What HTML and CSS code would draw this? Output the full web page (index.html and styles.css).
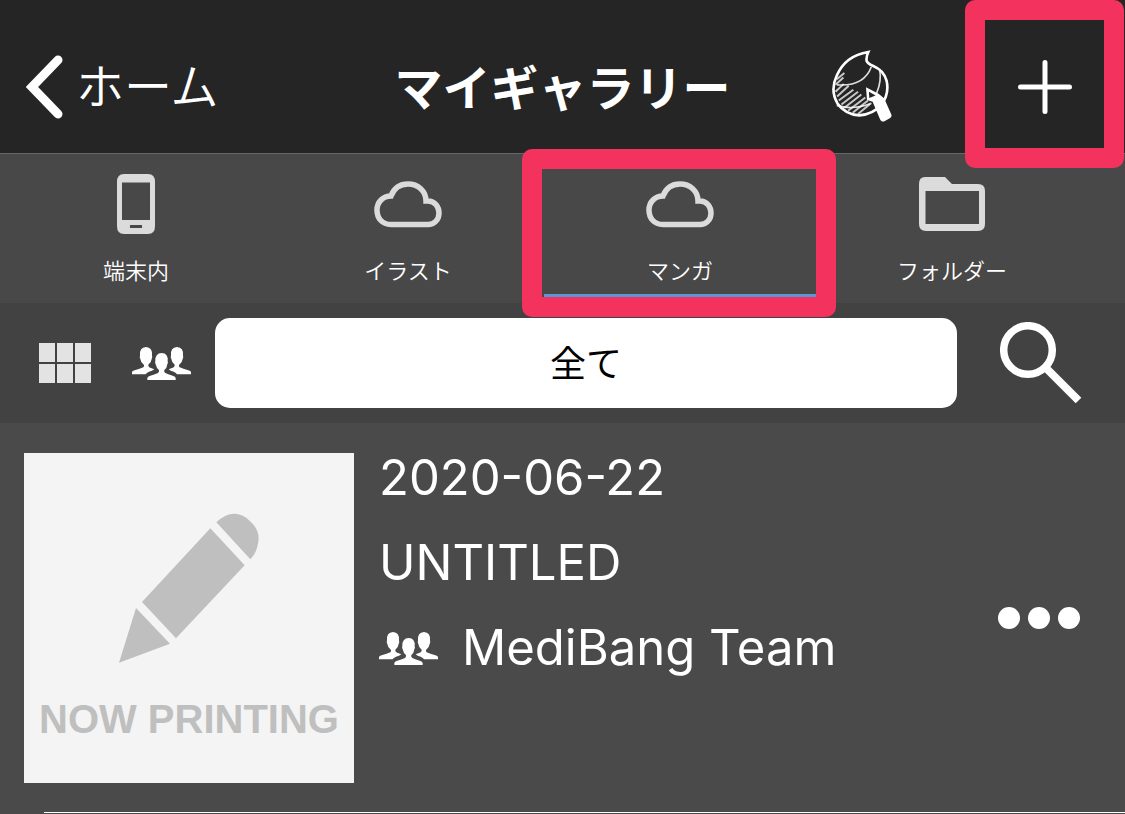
FILE: index.html
```html
<!DOCTYPE html>
<html lang="ja">
<head>
<meta charset="utf-8">
<meta name="viewport" content="width=device-width, initial-scale=1">
<title>マイギャラリー</title>
<link rel="stylesheet" href="styles.css">
</head>
<body>
<svg class="defs" aria-hidden="true">
  <symbol id="team" viewBox="0 0 177 99">
    <path d="M0 82V76Q0 72 8 70Q24 65 34 61Q37 58 36 54Q26 47 25 36Q22 31 24 25Q22 1 42 0Q62 1 60 25Q62 31 59 36Q58 46 49 53Q48 60 57 63L67 67Q61 72 51 74Q43 77 41 82Z"/>
    <path d="M177 82V76Q177 72 169 70Q153 65 143 61Q140 58 141 54Q151 47 152 36Q155 31 153 25Q155 1 135 0Q115 1 117 25Q115 31 118 36Q119 46 128 53Q129 60 120 63L110 67Q115 72 125 74Q133 77 135 82Z"/>
    <path d="M46 99V93Q46 88 55 86Q71 81 78 78Q82 75 81 69Q73 63 71 52Q68 47 70 42Q69 19 89 18Q109 19 107 42Q109 47 106 52Q105 63 97 69Q95 75 100 78Q107 81 122 86Q131 88 131 93V99Z"/>
  </symbol>
  <symbol id="cloud" viewBox="0 0 68 47">
    <path d="M17 15C20 7 26 3 34 3C44 3 52 10 52 20H54C61 20 65 26 65 32C65 39 60 43.500 54 43.500H17C8 43.500 3 37 3 29C3 21 9 15 17 15Z" fill="none" stroke="currentColor" stroke-width="5.500"/>
  </symbol>
</svg>

<header class="app-bar">
  <a class="back" href="#">
    <svg class="back-icon" viewBox="0 0 38 64" aria-hidden="true"><path d="M32 5L6 32L32 59" fill="none" stroke="currentColor" stroke-width="9" stroke-linecap="round" stroke-linejoin="miter"/></svg>
    ホーム
  </a>
  <h1 class="title">マイギャラリー</h1>
  <div class="actions">
    <button class="logo" type="button" aria-label="MediBang">
      <svg class="logo-icon" viewBox="66 58 180 220" aria-hidden="true" fill="none" stroke="currentColor">
        <g stroke-width="6" opacity=".75">
          <path d="M80 146L103 127M76 163L100 141M76 184L101 160M81 198L116 166M86 210L130 178M94 222L144 184M103 232L154 192M114 241L166 201M128 247L174 210M144 251L184 218"/>
        </g>
        <path d="M81 163Q161 169 184 109M209 115Q216 151 200 188M80 225Q127 240 180 220" stroke-width="5" opacity=".85"/>
        <path d="M175 64Q168 79 170 91Q173 99 190 106Q221 119 230 150Q239 189 215 222Q190 252 148 255Q105 252 82 219Q59 180 80 135Q106 75 175 64Z" stroke-width="8"/>
        <path d="M168 170L171 209L188 214L211 268Q216 277 225 272L241 263Q248 257 243 249L223 204L206 190Z" fill="currentColor" stroke="none"/>
        <path d="M177 184L178 203L197 195Z" fill="#252525" stroke="none"/>
      </svg>
    </button>
    <button class="add" type="button" aria-label="新規作成">
      <svg class="add-icon" viewBox="0 0 54 54" aria-hidden="true"><path d="M27 2.500V51.500M2.500 27H51.500" stroke="currentColor" stroke-width="5" stroke-linecap="round"/></svg>
    </button>
  </div>
</header>

<nav class="tabs">
  <a class="tab" href="#">
    <span class="tab-icon"><svg width="38" height="60" viewBox="0 0 38 60" aria-hidden="true"><path fill="currentColor" fill-rule="evenodd" d="M7 0H31Q38 0 38 8V52Q38 60 31 60H7Q0 60 0 52V8Q0 0 7 0ZM5 8.500V46H33V8.500ZM13 51V54H25V51Z"/></svg></span>
    端末内
  </a>
  <a class="tab" href="#">
    <span class="tab-icon"><svg width="68" height="47" aria-hidden="true"><use href="#cloud"/></svg></span>
    イラスト
  </a>
  <a class="tab tab-active" href="#" aria-current="page">
    <span class="tab-icon"><svg width="68" height="47" aria-hidden="true"><use href="#cloud"/></svg></span>
    マンガ
  </a>
  <a class="tab" href="#">
    <span class="tab-icon"><svg width="66" height="54" viewBox="0 0 66 54" aria-hidden="true"><path fill="currentColor" fill-rule="evenodd" d="M6 0H26L33 7H59Q66 7 66 14V47Q66 54 59 54H7Q0 54 0 47V7Q0 0 6 0ZM6.500 14V47H60V14Z"/></svg></span>
    フォルダー
  </a>
</nav>

<div class="filters">
  <button class="tool" type="button" aria-label="グリッド表示">
    <svg width="52" height="40" viewBox="0 0 52 40" aria-hidden="true"><path fill="#e3e3e3" d="M0 0H16V19H0ZM18 0H34V19H18ZM36 0H52V19H36ZM0 21H16V40H0ZM18 21H34V40H18ZM36 21H52V40H36Z"/></svg>
  </button>
  <button class="tool" type="button" aria-label="チーム">
    <svg class="team-icon" aria-hidden="true"><use href="#team"/></svg>
  </button>
  <select class="scope" aria-label="表示対象">
    <option>全て</option>
  </select>
  <button class="tool search" type="button" aria-label="検索">
    <svg width="82" height="82" viewBox="0 0 82 82" aria-hidden="true" fill="none" stroke="currentColor"><circle cx="28" cy="28" r="24.300" stroke-width="7.500"/><path d="M46 46L78.500 78.500" stroke-width="8"/></svg>
  </button>
</div>

<main class="list">
  <article class="item">
    <div class="thumb">
      <svg class="pencil" viewBox="328 220 420 448" aria-hidden="true"><path fill="currentColor" d="M620 247Q647 220 676 221Q703 222 723 245Q747 267 747 297Q744 336 722 358ZM602 265L705 376L499 595L397 486ZM379 504L481 611L328 668Z"/></svg>
      <span>NOW PRINTING</span>
    </div>
    <div class="info">
      <time datetime="2020-06-22">2020-06-22</time>
      <h2 class="name">UNTITLED</h2>
      <p class="owner"><svg class="team-icon" aria-hidden="true"><use href="#team"/></svg>MediBang Team</p>
    </div>
    <button class="more" type="button" aria-label="メニュー"><span class="dot"></span><span class="dot"></span><span class="dot"></span></button>
  </article>
</main>
</body>
</html>
```
FILE: styles.css
```css
* {
  box-sizing: border-box;
}

body {
  margin: 0;
  min-height: 100vh;
  background: #4a4a4a;
  color: #fff;
  font-family: Inter, "Noto Sans CJK JP", sans-serif;
}

button {
  display: flex;
  align-items: center;
  justify-content: center;
  padding: 0;
  border: 0;
  background: none;
  color: inherit;
  font: inherit;
}

a {
  color: inherit;
  text-decoration: none;
}

svg {
  display: block;
  flex: none;
}

.defs {
  position: absolute;
  width: 0;
  height: 0;
}

.app-bar {
  display: grid;
  grid-template-columns: 1fr auto 1fr;
  align-items: center;
  padding-top: 20px;
  background: #252525;
  border-bottom: 1px solid #666;
}

.back {
  display: flex;
  align-items: center;
  gap: 12px;
  padding-left: 26px;
  font-size: 48px;
  font-weight: 350;
  line-height: 64px;
}

.back-icon {
  width: 38px;
  height: 64px;
}

.title {
  margin: 0;
  padding-top: 4px;
  font-size: 48px;
  font-weight: 700;
  line-height: 64px;
}

.actions {
  display: flex;
  align-items: center;
  justify-content: flex-end;
  gap: 93px;
  padding-right: 21px;
}

.logo-icon {
  width: 60px;
  height: 73px;
}

.add {
  position: relative;
  width: 119px;
  height: 133px;
}

.add-icon {
  width: 54px;
  height: 54px;
}

.add::after,
.tab-active::after {
  content: "";
  position: absolute;
  z-index: 1;
  border: 20px solid #f4325e;
  border-radius: 10px;
  pointer-events: none;
}

.add::after {
  inset: -20px -20px -15px;
}

.tabs {
  display: grid;
  grid-template-columns: repeat(4, 1fr);
  padding-right: 37px;
  background: #484848;
}

.tab {
  position: relative;
  display: flex;
  flex-direction: column;
  align-items: center;
  gap: 20px;
  padding: 20px 0 15px;
  font-size: 22px;
  font-weight: 350;
  line-height: 34px;
}

.tab-icon {
  display: flex;
  align-items: center;
  height: 60px;
  color: #dbdbdb;
}

.tab-active {
  background: linear-gradient(#5f95d3, #5f95d3) 0 140px / 100% 3px no-repeat;
}

.tab-active::after {
  inset: -5px -20px -14px -22px;
}

.filters {
  display: flex;
  align-items: center;
  gap: 41px;
  padding: 15px 43px 15px 39px;
  background: #424242;
}

.team-icon {
  width: 59px;
  height: 33px;
  fill: #fff;
}

.scope {
  flex: 1;
  min-width: 0;
  height: 90px;
  margin: 0 2px 0 -17px;
  padding: 0 0 4px;
  border: 0;
  border-radius: 15px;
  appearance: none;
  background: #fff;
  color: #000;
  font: 400 36px "Noto Sans CJK JP", sans-serif;
  text-align: center;
  text-align-last: center;
}

.item {
  display: flex;
  align-items: center;
  padding: 30px 45px 29px 24px;
  border-bottom: 1px solid;
  border-image: linear-gradient(90deg, transparent 45px, #fff 45px) 1;
}

.thumb {
  display: flex;
  flex: none;
  flex-direction: column;
  align-items: center;
  gap: 32px;
  width: 330px;
  height: 330px;
  padding-top: 60px;
  background: #f4f4f4;
  color: #bfbfbf;
  font: 700 40px/48px "Liberation Sans", Arial, sans-serif;
  white-space: nowrap;
}

.pencil {
  width: 140px;
  height: 150px;
}

.info {
  display: flex;
  flex: 1;
  flex-direction: column;
  align-self: flex-start;
  gap: 25px;
  min-width: 0;
  padding-left: 25px;
  font-size: 49px;
  line-height: 60px;
}

.info time {
  margin-top: -5px;
}

.name,
.owner {
  margin: 0;
  font-size: 49px;
  font-weight: 400;
}

.owner {
  display: flex;
  align-items: center;
  gap: 24px;
}

.more {
  gap: 8px;
}

.dot {
  width: 22px;
  height: 22px;
  border-radius: 50%;
  background: #fff;
}
```
